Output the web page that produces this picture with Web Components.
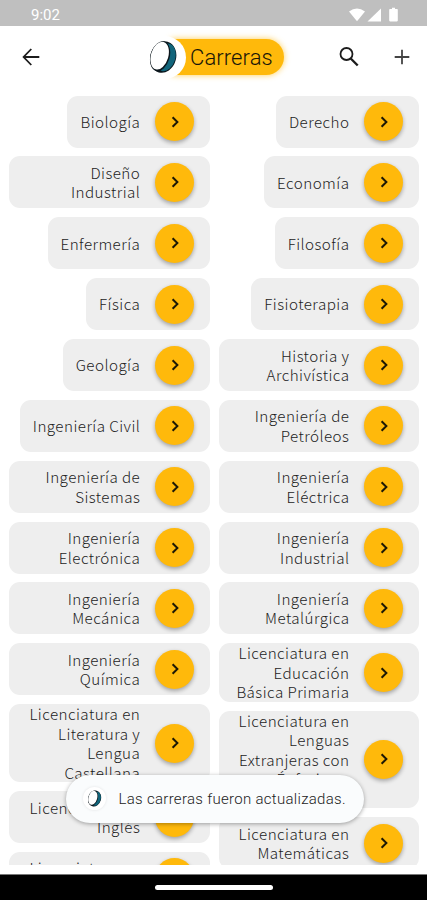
<!DOCTYPE html>
<html lang="es">
<head>
<meta charset="utf-8">
<title>Carreras</title>
<style>
  body {
    margin: 0;
    font-family: Roboto, "Liberation Sans", sans-serif;
  }
</style>
</head>
<body>
<career-app></career-app>

<script>
const careers = [
    [
        'Biología', 'Diseño|Industrial', 'Enfermería', 'Física', 'Geología',
        'Ingeniería Civil', 'Ingeniería de|Sistemas', 'Ingeniería|Electrónica',
        'Ingeniería|Mecánica', 'Ingeniería|Química',
        'Licenciatura en|Literatura y|Lengua|Castellana',
        'Licenciatura en|Inglés', 'Licenciatura en|Música'
    ],
    [
        'Derecho', 'Economía', 'Filosofía', 'Fisioterapia', 'Historia y|Archivística',
        'Ingeniería de|Petróleos', 'Ingeniería|Eléctrica', 'Ingeniería|Industrial',
        'Ingeniería|Metalúrgica', 'Licenciatura en|Educación|Básica Primaria',
        'Licenciatura en|Lenguas|Extranjeras con|Énfasis en|Inglés',
        'Licenciatura en|Matemáticas'
    ]
];

class StatusBar extends HTMLElement {
    constructor() {
        super();
        this.attachShadow({ mode: 'open' });
    }

    connectedCallback() {
        this.shadowRoot.innerHTML = `
    <style>
      :host {
        display: flex;
        justify-content: space-between;
        align-items: center;
        box-sizing: border-box;
        height: 26px;
        padding: 3px 29px 0 31px;
        background: #bfbfbf;
        color: #fff;
        font-size: 15px;
      }
      svg { display: block; fill: #fff; }
    </style>
    <span>9:02</span>
    <svg width="50" height="16" viewBox="0 0 50 16">
      <path d="M1 4.6 Q9 -1.8 17 4.6 L9 14.2 Z"/>
      <path d="M33 1.6 V14.4 H19.5 Z"/>
      <path d="M42 2 h2 v-1.2 h3 v1.2 h2 q.8 0 .8.8 v10.8 q0 .8-.8.8 h-7 q-.8 0-.8-.8 v-10.8 q0-.8.8-.8 Z"/>
    </svg>
  `;
    }
}

class RingLogo extends HTMLElement {
    constructor() {
        super();
        this.attachShadow({ mode: 'open' });
    }

    connectedCallback() {
        this.shadowRoot.innerHTML = `
    <style>
      :host { display: block; width: 30px; height: 34px; }
      svg { display: block; width: 100%; height: 100%; }
    </style>
    <svg viewBox="0 0 30 34">
      <g transform="rotate(16 15 17)">
        <ellipse cx="15.2" cy="17" rx="12.9" ry="16" fill="#0b161c"/>
        <ellipse cx="17.6" cy="16.6" rx="9.7" ry="14.2" fill="#11657b"/>
        <ellipse cx="12" cy="17" rx="9.6" ry="15.2" fill="#0b161c"/>
        <ellipse cx="11.4" cy="16.6" rx="8.7" ry="14.3" fill="#fff"/>
      </g>
    </svg>
  `;
    }
}

class TopBar extends HTMLElement {
    constructor() {
        super();
        this.attachShadow({ mode: 'open' });
    }

    connectedCallback() {
        this.shadowRoot.innerHTML = `
    <style>
      :host {
        display: flex;
        align-items: center;
        box-sizing: border-box;
        height: 62px;
        padding: 0 13.5px 0 19px;
      }
      svg { display: block; fill: none; stroke: #1c1c1c; stroke-width: 1.8; }
      .title { display: flex; align-items: center; margin-left: 99.5px; }
      .mark {
        display: flex;
        align-items: center;
        box-sizing: border-box;
        width: 43px;
        height: 43px;
        padding-left: 5px;
        border-radius: 50%;
        background: #fff;
        z-index: 1;
      }
      .pill {
        display: flex;
        align-items: center;
        box-sizing: border-box;
        width: 113px;
        height: 36px;
        margin-left: -15px;
        padding-left: 19.5px;
        border-radius: 0 18px 18px 0;
        background: #ffb90b;
        box-shadow: 0 0 6px rgba(255, 185, 11, .7);
        color: #1a1608;
        font-size: 22px;
        font-weight: 300;
        letter-spacing: .1px;
      }
      .actions { display: flex; align-items: center; gap: 28.5px; margin-left: auto; }
    </style>
    <svg width="24" height="24" viewBox="0 0 24 24"><path d="M20.3 12 H5 M12.3 4 L4.6 12 L12.3 20"/></svg>
    <div class="title">
      <div class="mark"><ring-logo></ring-logo></div>
      <div class="pill"><slot></slot></div>
    </div>
    <div class="actions">
      <svg width="24" height="24" viewBox="0 0 24 24"><circle cx="9.5" cy="9" r="6"/><path d="M13.7 13.5 L20.7 20.5" stroke-width="2.4"/></svg>
      <svg width="24" height="24" viewBox="0 0 24 24" style="stroke:#444"><path d="M12 4.7 V19.3 M4.7 12 H19.3"/></svg>
    </div>
  `;
    }
}

class CareerCard extends HTMLElement {
    constructor() {
        super();
        this.attachShadow({ mode: 'open' });
    }

    connectedCallback() {
        this.shadowRoot.innerHTML = `
    <style>
      :host {
        display: flex;
        flex: none;
        justify-content: flex-end;
        align-items: center;
        box-sizing: border-box;
        min-height: 52px;
        padding: 0 15.5px 0 13px;
        gap: 15px;
        border-radius: 11px;
        background: #eee;
      }
      :host([wide]) { align-self: stretch; }
      .label {
        color: #1c1c1c;
        font-family: "Noto Sans CJK SC", Roboto, sans-serif;
        font-size: 15.2px;
        font-weight: 300;
        line-height: 19.5px;
        letter-spacing: .45px;
        text-align: right;
        white-space: pre;
      }
      .go {
        display: flex;
        flex: none;
        align-items: center;
        justify-content: center;
        width: 39px;
        height: 39px;
        border-radius: 50%;
        background: #ffb90b;
        box-shadow: 0 2px 4px rgba(0, 0, 0, .32);
      }
    </style>
    <div class="label"><slot></slot></div>
    <div class="go">
      <svg width="12" height="14" viewBox="0 0 12 14" fill="none" stroke="#1e1905" stroke-width="2"><path d="M3.6 2.2 L8.4 7 L3.6 11.8"/></svg>
    </div>
  `;
    }
}

class SnackBar extends HTMLElement {
    constructor() {
        super();
        this.attachShadow({ mode: 'open' });
    }

    connectedCallback() {
        this.shadowRoot.innerHTML = `
    <style>
      :host {
        display: flex;
        align-items: center;
        box-sizing: border-box;
        width: 298px;
        height: 48px;
        padding-left: 17px;
        gap: 13px;
        border-radius: 24px;
        background: #fafcfd;
        box-shadow: 0 1px 4px rgba(0, 0, 0, .35);
        color: #222;
        font-size: 15px;
        font-weight: 300;
        letter-spacing: .3px;
        white-space: nowrap;
      }
      .badge {
        display: flex;
        align-items: center;
        justify-content: center;
        width: 23px;
        height: 23px;
        border-radius: 50%;
        background: #fff;
        box-shadow: 0 0 3px rgba(0, 0, 0, .1);
      }
      ring-logo { width: 15px; height: 17px; }
    </style>
    <div class="badge"><ring-logo></ring-logo></div>
    <slot></slot>
  `;
    }
}

class CareerApp extends HTMLElement {
    constructor() {
        super();
        this.attachShadow({ mode: 'open' });
    }

    connectedCallback() {
        this.shadowRoot.innerHTML = `
    <style>
      :host {
        display: flex;
        flex-direction: column;
        position: relative;
        width: 427px;
        height: 900px;
        overflow: hidden;
        background: #fff;
      }
      .list {
        display: grid;
        grid-template-columns: 1fr 1fr;
        column-gap: 8.8px;
        box-sizing: border-box;
        height: 777.5px;
        padding: 7.9px 8.1px 0 9.4px;
        margin-top: -.3px;
        overflow: hidden;
      }
      .column {
        display: flex;
        flex-direction: column;
        align-items: flex-end;
        gap: 8.87px;
      }
      .nav {
        display: flex;
        align-items: center;
        justify-content: center;
        box-sizing: border-box;
        height: 26px;
        margin-top: auto;
        border-top: 1px solid #777;
        background: #000;
      }
      .handle { width: 118px; height: 5px; border-radius: 3px; background: #fff; }
      snack-bar { position: absolute; left: 65.5px; top: 774.5px; }
    </style>
    <status-bar></status-bar>
    <top-bar>Carreras</top-bar>
    <div class="list">
      <div class="column"></div>
      <div class="column"></div>
    </div>
    <div class="nav"><div class="handle"></div></div>
    <snack-bar>Las carreras fueron actualizadas.</snack-bar>
  `;

        this.shadowRoot.querySelectorAll('.column').forEach((column, i) => {
            careers[i].forEach(name => column.appendChild(this.createCard(name)));
        });
    }

    createCard(name) {
        const card = document.createElement('career-card');
        const lines = name.split('|');
        card.textContent = lines.join('\n');
        // names that wrap take the full column width
        if (lines.length > 1) card.setAttribute('wide', '');
        return card;
    }
}

customElements.define('status-bar', StatusBar);
customElements.define('ring-logo', RingLogo);
customElements.define('top-bar', TopBar);
customElements.define('career-card', CareerCard);
customElements.define('snack-bar', SnackBar);
customElements.define('career-app', CareerApp);
</script>
</body>
</html>
